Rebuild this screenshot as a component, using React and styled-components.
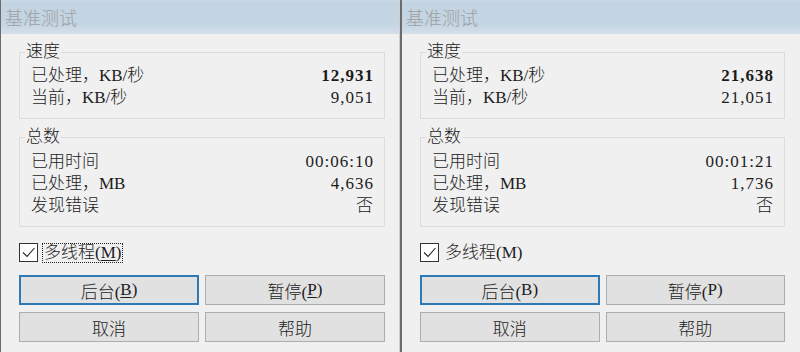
import styled, { createGlobalStyle } from "styled-components";

const GlobalStyle = createGlobalStyle`
    html, body {
        margin: 0;
        padding: 0;
        background: #f0f0f0;
        overflow: hidden;
    }
`

const Page = styled.div`
    display: flex;
    width: 800px;
    height: 352px;
    font-family: "Liberation Serif", "Noto Sans CJK SC", serif;
    font-size: 17px;
    font-weight: 300;
    color: #1c1c1c;
`

const Window = styled.div`
    display: flex;
    flex-direction: column;
    width: 400px;
    height: 352px;
    box-sizing: border-box;
    background: #f0f0f0;
    border-left: ${p => p.$edge}px solid #6c6c6c;
    border-right: ${p => (p.$last ? 0 : 1)}px solid #cfcfcf;
`

const TitleBar = styled.div`
    display: flex;
    align-items: center;
    height: 34px;
    padding-left: 4px;
    background: linear-gradient(#cbd9e6 0px, #c2d3e1 3px, #c4d5e3 24px, #d4e0ea 34px);
    font-family: "Noto Sans CJK SC", sans-serif;
    font-size: 18px;
    color: #a0a0a0;
`

const Body = styled.div`
    display: flex;
    flex-direction: column;
    padding: 18px ${p => p.$right}px 0 18px;
`

const Group = styled.div`
    position: relative;
    border: 1px solid #dcdcdc;
    padding: ${p => p.$top}px 11px 9px 11px;
    margin-bottom: 18px;
`

const Legend = styled.span`
    position: absolute;
    top: -12px;
    left: 5px;
    padding: 0 1px;
    background: #f0f0f0;
    line-height: 22px;
`

const Row = styled.div`
    display: flex;
    justify-content: space-between;
    align-items: center;
    height: 22px;
    line-height: 22px;
    white-space: nowrap;
`

const Value = styled.span`
    letter-spacing: 1px;
    margin-right: -1px;
    font-weight: ${p => (p.$bold ? 700 : 300)};
`

const CheckRow = styled.label`
    display: flex;
    align-items: center;
    gap: 4px;
    height: 19px;
    margin-top: -2px;
`

const Box = styled.span`
    display: flex;
    align-items: center;
    justify-content: center;
    width: 17px;
    height: 17px;
    border: 1px solid #333;
    background: #fff;
`

const CheckText = styled.span`
    padding: 0 1px;
    line-height: 18px;
    border: 1px dotted ${p => (p.$focus ? "#222" : "transparent")};
`

const Buttons = styled.div`
    display: grid;
    grid-template-columns: 1fr 1fr;
    column-gap: 6px;
    row-gap: 7px;
    margin-top: 13px;
`

const Button = styled.div`
    display: flex;
    align-items: center;
    justify-content: center;
    height: 30px;
    box-sizing: border-box;
    background: #e1e1e1;
    border: ${p => (p.$default ? "2px solid #2f79b4" : "1px solid #adadad")};
`

const Key = styled.span`
    text-decoration: ${p => (p.$show ? "underline" : "none")};
    text-underline-offset: 2px;
`

function Dialog({ edge, right, last, keys, speed, totals }) {
  return (
    <Window $edge={edge} $last={last}>
      <TitleBar>基准测试</TitleBar>
      <Body $right={right}>
        <Group $top={12}>
          <Legend>速度</Legend>
          <Row><span>已处理，KB/秒</span><Value $bold>{speed[0]}</Value></Row>
          <Row><span>当前，KB/秒</span><Value>{speed[1]}</Value></Row>
        </Group>
        <Group $top={13}>
          <Legend>总数</Legend>
          <Row><span>已用时间</span><Value>{totals[0]}</Value></Row>
          <Row><span>已处理，MB</span><Value>{totals[1]}</Value></Row>
          <Row><span>发现错误</span><Value>{totals[2]}</Value></Row>
        </Group>
        <CheckRow>
          <Box>
            <svg width="15" height="15" viewBox="0 0 15 15">
              <polyline points="2,7.5 6,11.5 13.5,3" fill="none" stroke="#222" strokeWidth="1.1" />
            </svg>
          </Box>
          <CheckText $focus={keys}>多线程(<Key $show={keys}>M</Key>)</CheckText>
        </CheckRow>
        <Buttons>
          <Button $default>后台(<Key $show={keys}>B</Key>)</Button>
          <Button>暂停(<Key $show={keys}>P</Key>)</Button>
          <Button>取消</Button>
          <Button>帮助</Button>
        </Buttons>
      </Body>
    </Window>
  )
}

export default function App() {
  return (
    <>
      <GlobalStyle />
      <Page>
        <Dialog edge={1} right={14} keys speed={["12,931", "9,051"]} totals={["00:06:10", "4,636", "否"]} />
        <Dialog edge={2} right={15} last speed={["21,638", "21,051"]} totals={["00:01:21", "1,736", "否"]} />
      </Page>
    </>
  )
}
